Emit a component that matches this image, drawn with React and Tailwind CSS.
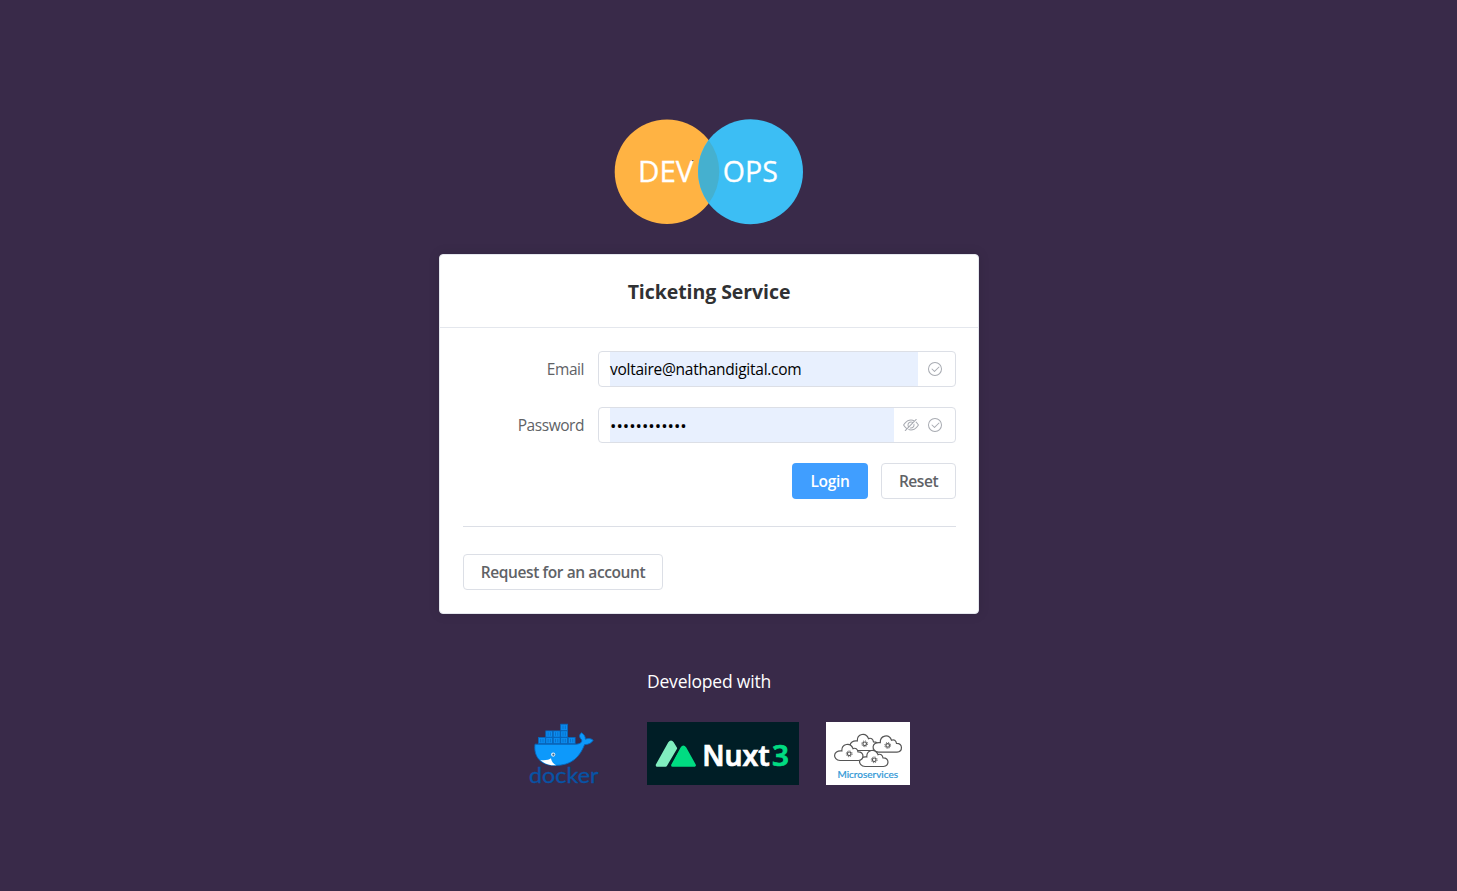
const CIRCLE_CHECK = [
  "M512 896a384 384 0 1 0 0-768 384 384 0 0 0 0 768m0 64a448 448 0 1 1 0-896 448 448 0 0 1 0 896",
  "M745.344 361.344a32 32 0 0 1 45.312 45.312l-288 288a32 32 0 0 1-45.312 0l-160-160a32 32 0 1 1 45.312-45.312L480 626.752z",
];

const HIDE = [
  "M876.8 156.8c0-9.6-3.2-16-9.6-22.4-6.4-6.4-12.8-9.6-22.4-9.6-9.6 0-16 3.2-22.4 9.6L736 220.8c-64-32-137.6-51.2-224-60.8-160 16-288 73.6-377.6 176C44.8 438.4 0 496 0 512s48 73.6 134.4 176c22.4 25.6 44.8 48 73.6 67.2l-86.4 89.6c-6.4 6.4-9.6 12.8-9.6 22.4 0 9.6 3.2 16 9.6 22.4 6.4 6.4 12.8 9.6 22.4 9.6 9.6 0 16-3.2 22.4-9.6l704-710.4c3.2-6.4 6.4-12.8 6.4-22.4Zm-646.4 528c-76.8-70.4-128-128-153.6-172.8 28.8-48 80-105.6 153.6-172.8C304 272 400 230.4 512 224c64 3.2 124.8 19.2 176 44.8l-54.4 54.4C598.4 300.8 560 288 512 288c-64 0-115.2 22.4-160 64s-64 96-64 160c0 48 12.8 89.6 35.2 124.8L256 707.2c-9.6-6.4-19.2-16-25.6-22.4Zm140.8-96c-12.8-22.4-19.2-48-19.2-76.8 0-44.8 16-83.2 48-112 32-28.8 67.2-48 112-48 28.8 0 54.4 6.4 73.6 19.2L371.2 588.8ZM889.599 336c-12.8-16-28.8-28.8-41.6-41.6l-48 48c73.6 67.2 124.8 124.8 150.4 169.6-28.8 48-80 105.6-153.6 172.8-73.6 67.2-172.8 108.8-284.8 115.2-51.2-3.2-99.2-12.8-140.8-28.8l-48 48c57.6 22.4 118.4 38.4 188.8 44.8 160-16 288-73.6 377.6-176C979.199 585.6 1024 528 1024 512s-48.001-73.6-134.401-176Z",
  "M511.998 672c-12.8 0-25.6-3.2-38.4-6.4l-51.2 51.2c28.8 12.8 57.6 19.2 89.6 19.2 64 0 115.2-22.4 160-64 41.6-41.6 64-96 64-160 0-32-6.4-64-19.2-89.6l-51.2 51.2c3.2 12.8 6.4 25.6 6.4 38.4 0 44.8-16 83.2-48 112-32 28.8-67.2 48-112 48Z",
];

function Icon({ paths }) {
  return (
    <svg viewBox="0 0 1024 1024" className="size-4 shrink-0 fill-[#a8abb2]">
      {paths.map((d) => (
        <path key={d} d={d} />
      ))}
    </svg>
  );
}

function DevOpsLogo() {
  return (
    <svg width="190" height="106" viewBox="0 0 190 106" className="block">
      <circle cx="53" cy="52.7" r="52.3" fill="#ffb343" />
      <circle cx="136.5" cy="52.7" r="52.5" fill="#3cbef4" />
      <path d="M94.7 21.2A52.3 52.3 0 0 1 94.7 84.2A52.5 52.5 0 0 1 94.7 21.2Z" fill="#45b0cf" />
      <g fill="#fff" stroke="#fff" strokeWidth="0.3" fontFamily="'Open Sans'" fontSize="30">
        <text x="24" y="63.4" textLength="55.5" lengthAdjust="spacingAndGlyphs">DEV</text>
        <text x="108.8" y="63.4" textLength="55" lengthAdjust="spacingAndGlyphs">OPS</text>
      </g>
      <circle cx="78.8" cy="41.6" r="0.7" fill="#3a2a48" />
    </svg>
  );
}

const CONTAINERS = [
  [538.4, 737.5], [545.8, 737.5], [553.2, 737.5], [560.7, 737.5], [568.2, 737.5],
  [545.8, 730.9], [553.2, 730.9], [560.7, 730.9],
  [560.7, 724.2],
];

function DockerLogo() {
  return (
    <svg width="76" height="63" viewBox="526 722 76 63" className="block overflow-visible">
      {CONTAINERS.map(([x, y]) => (
        <g key={`${x}-${y}`}>
          <rect x={x} y={y} width="6.9" height="6.2" fill="#0b8cf0" stroke="#0567bd" strokeWidth="0.8" />
          <path d={`M${x + 2.3} ${y + 1.3}v3.6M${x + 4.6} ${y + 1.3}v3.6`} stroke="#0567bd" strokeWidth="0.7" />
        </g>
      ))}
      <path
        d="M535 744.2H575C579.5 744.2 582.5 742.6 581.6 739.8C579.2 737.4 578.6 735 581.6 732.8C584 734.4 585.6 736.6 585.3 739.2C588 738 591 738.4 593.2 740.2C591.6 743 588.6 744.6 584.6 744.6C579.5 757.5 571.4 765.5 555 765.5C541 765.5 533.4 757 535 744.2Z"
        fill="#0d99fb"
        stroke="#0567bd"
        strokeWidth="0.9"
      />
      <path d="M540.3 760C545 760.6 549.5 759.8 551 758.2C551.5 761.5 553.5 764 556.5 765.3C550 765.7 544.5 764 540.3 760Z" fill="#fff" />
      <circle cx="553.2" cy="754.6" r="2.1" fill="#e8f5ff" />
      <circle cx="553.4" cy="754.7" r="1.1" fill="#39698e" />
      <text x="529" y="783.4" fill="#0853a5" stroke="#0853a5" strokeWidth="0.3" fontFamily="Lato" fontSize="20.5" textLength="69.5" lengthAdjust="spacingAndGlyphs">docker</text>
    </svg>
  );
}

function NuxtLogo() {
  return (
    <svg width="152" height="63" viewBox="0 0 152 63" className="block bg-[#001e26]">
      <path d="M10.2 43.2L22.6 21Q24 18.8 25.4 21L28.6 26.2L18.6 43.2Z" fill="#80eec0" stroke="#80eec0" strokeWidth="3" strokeLinejoin="round" />
      <path d="M25.6 43.2L35 26Q36.4 23.8 37.8 26L47.4 43.2Z" fill="#00dc82" stroke="#00dc82" strokeWidth="3" strokeLinejoin="round" />
      <path d="M33.6 23.4L22 44.9" stroke="#001e26" strokeWidth="1.1" />
      <g fontFamily="'Noto Sans'" fontWeight="600" fontSize="28" strokeWidth="0.7">
        <text x="55.2" y="44.2" fill="#fff" stroke="#fff" textLength="67.6" lengthAdjust="spacingAndGlyphs">Nuxt</text>
        <text x="125" y="44.2" fill="#00dc82" stroke="#00dc82" textLength="17" lengthAdjust="spacingAndGlyphs">3</text>
      </g>
    </svg>
  );
}

const CLOUD = "M6 17.5H24.5C30.5 17 30.5 8.5 24 8.8C23.5 5.8 21.5 4.6 19 5.6C16.5 -1 7.5 0.5 7.8 8C-1.5 7 -1.5 17 6 17.5Z";

function Cloud({ x, y }) {
  return (
    <g transform={`translate(${x} ${y})`}>
      <path d={CLOUD} fill="#fff" stroke="#555" strokeWidth="1.2" />
      <circle cx="15.2" cy="10.8" r="2.9" fill="none" stroke="#666" strokeWidth="1" strokeDasharray="1.2 1.08" />
      <circle cx="15.2" cy="10.8" r="1.8" fill="#fff" stroke="#555" strokeWidth="1.2" />
    </g>
  );
}

function MicroservicesLogo() {
  return (
    <svg width="84" height="63" viewBox="0 0 84 63" className="block bg-white">
      <Cloud x={23.5} y={11} />
      <Cloud x={33} y={27} />
      <Cloud x={46.5} y={12.6} />
      <Cloud x={8} y={21} />
      <text x="11.5" y="55.6" fill="#2f97d6" stroke="#2f97d6" strokeWidth="0.2" fontFamily="Lato" fontSize="9.2" textLength="60.5" lengthAdjust="spacingAndGlyphs">Microservices</text>
    </svg>
  );
}

function Field({ label, children, icons }) {
  return (
    <div className="flex h-9 items-center">
      <label className="w-[121px] pt-0.5 text-right text-[15.5px] tracking-[-0.45px] text-[#606266]">{label}</label>
      <div className="ml-3.5 flex h-9 flex-1 items-stretch rounded border border-[#dcdfe6] pl-[11px] pr-3">
        <div className="flex flex-1 items-center bg-[#e8f0fe] pt-0.5 text-black">{children}</div>
        <div className="flex items-center gap-2 pl-[9px]">{icons}</div>
      </div>
    </div>
  );
}

export default function App() {
  return (
    <div className="flex h-[891px] w-full flex-col items-center bg-[#392a49] pr-[39px] pt-[119px] font-['Open_Sans','Noto_Sans',sans-serif]">
      <div className="h-[135px]">
        <DevOpsLogo />
      </div>

      <main className="h-[360px] w-[540px] rounded border border-[#e4e7ed] bg-white shadow-[0_0_12px_rgba(0,0,0,0.12)]">
        <header className="flex h-[73px] items-center justify-center border-b border-[#e4e7ed] pt-0.5">
          <h1 className="whitespace-nowrap text-[19.5px] font-bold tracking-[-0.07px] text-[#303133]">Ticketing Service</h1>
        </header>
        <div className="flex flex-col pl-[23px] pr-[22px] pt-[23px]">
          <Field label="Email" icons={<Icon paths={CIRCLE_CHECK} />}>
            <span className="text-[15.5px] tracking-[-0.26px]">voltaire@nathandigital.com</span>
          </Field>
          <div className="h-5" />
          <Field label="Password" icons={<><Icon paths={HIDE} /><Icon paths={CIRCLE_CHECK} /></>}>
            <span className="pb-px text-[17px]">••••••••••••</span>
          </Field>
          <div className="mt-5 flex justify-end gap-[13px]">
            <button className="h-9 w-[76px] rounded bg-[#409eff] pt-0.5 text-[15.5px] font-semibold tracking-[-0.3px] text-white">Login</button>
            <button className="h-9 w-[75px] rounded border border-[#dcdfe6] pt-0.5 text-[15.5px] font-semibold tracking-[-0.45px] text-[#606266]">Reset</button>
          </div>
          <hr className="mt-[27px] border-t border-[#dcdfe6]" />
          <button className="mt-[27px] h-9 w-[200px] whitespace-nowrap rounded border border-[#dcdfe6] pt-0.5 text-[15.5px] font-semibold tracking-[-0.4px] text-[#606266]">
            Request for an account
          </button>
        </div>
      </main>

      <footer className="mt-[53px] w-[540px]">
        <p className="pl-[208px] text-[17.5px] leading-7 tracking-[-0.2px] text-white">Developed with</p>
        <div className="mt-[27px] flex pl-[87px]">
          <DockerLogo />
          <div className="ml-[45px] mr-[27px]">
            <NuxtLogo />
          </div>
          <MicroservicesLogo />
        </div>
      </footer>
    </div>
  );
}
